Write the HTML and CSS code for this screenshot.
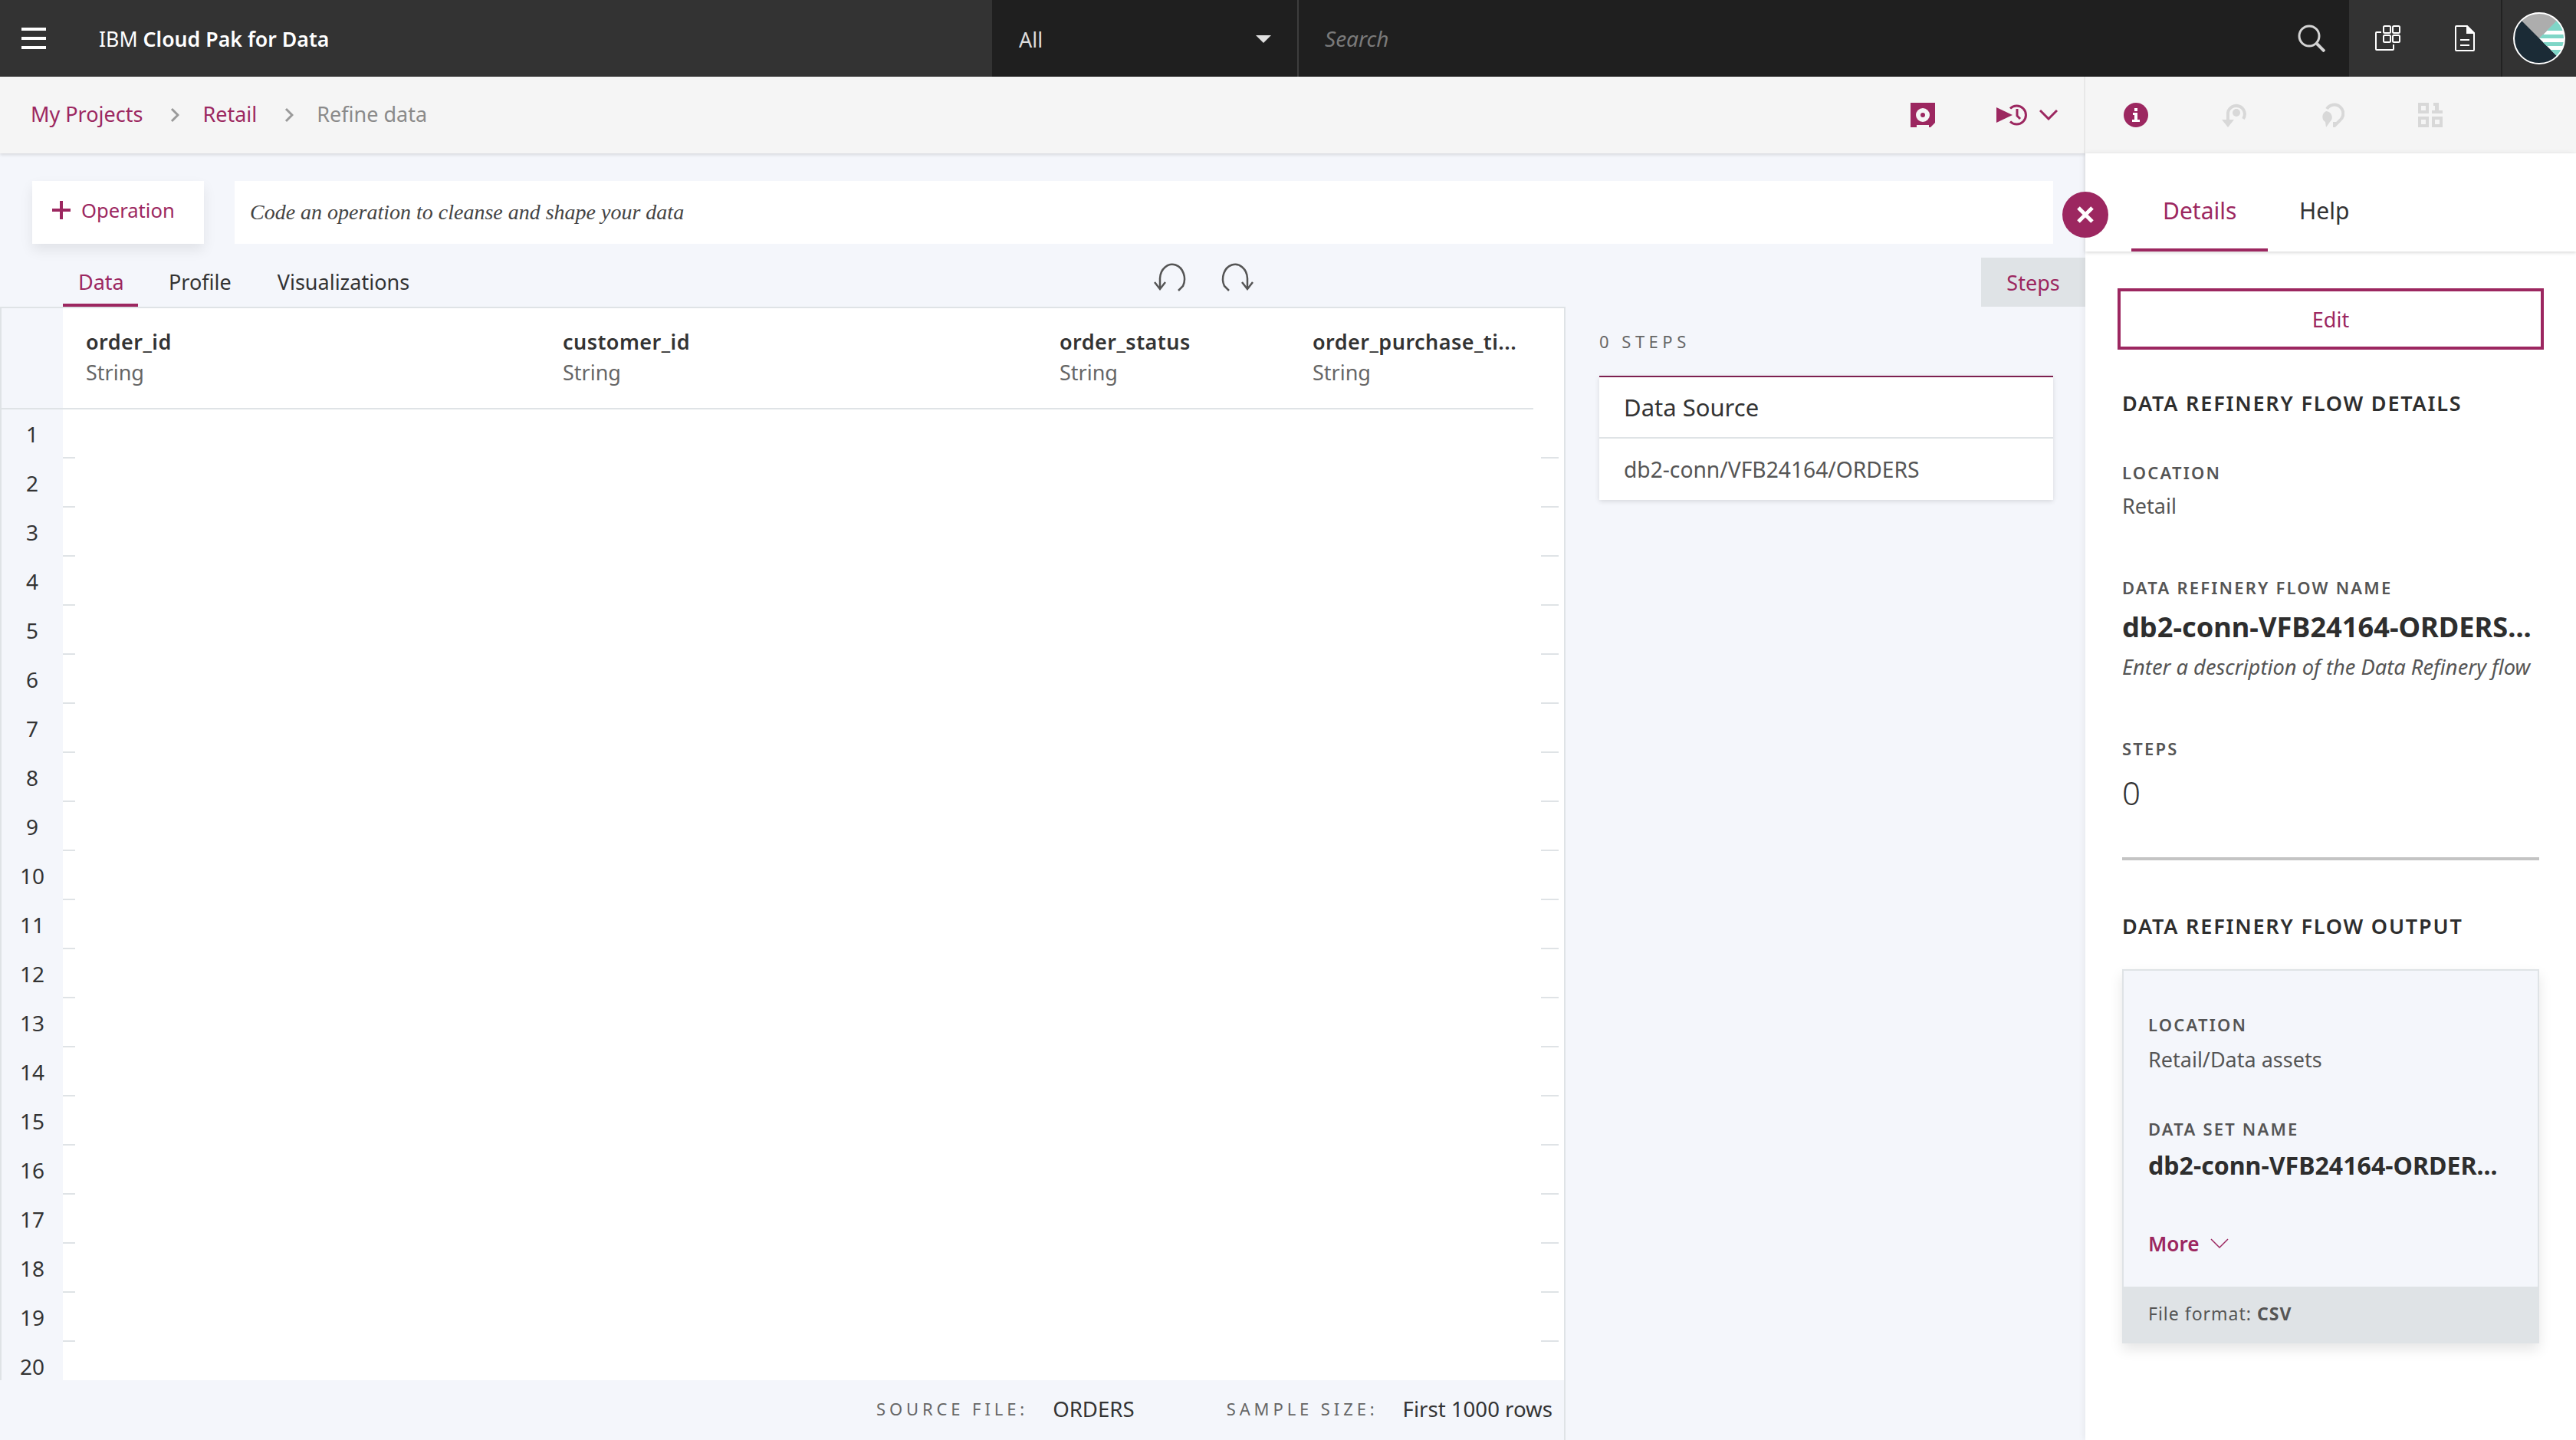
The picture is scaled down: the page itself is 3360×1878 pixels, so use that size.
FILE: index.html
```html
<!DOCTYPE html>
<html lang="en">
<head>
    <meta charset="UTF-8">
    <title>Refine data - IBM Cloud Pak for Data</title>
    <link rel="stylesheet" href="styles.css">
</head>
<body>
    <header class="top-bar">
        <div class="brand">
            <svg class="menu-icon" width="32" height="28" viewBox="0 0 32 28"><path d="M0 0h32v4H0zM0 12h32v4H0zM0 24h32v4H0z" fill="#fff"/></svg>
            <span class="brand-name">IBM <b>Cloud Pak for Data</b></span>
        </div>
        <div class="scope-select">
            <span>All</span>
            <svg width="20" height="10" viewBox="0 0 20 10"><path d="M0 0h20L10 10z" fill="#e0e0e0"/></svg>
        </div>
        <div class="search">
            <span class="search-text">Search</span>
            <svg width="36" height="36" viewBox="0 0 36 36" fill="none" stroke="#d4d4d4" stroke-width="3"><circle cx="15" cy="15" r="13"/><path d="M25 25l10 10" stroke-width="4"/></svg>
        </div>
        <div class="top-actions">
            <svg class="apps-icon" width="34" height="34" viewBox="0 0 34 34" fill="none" stroke="#fff" stroke-width="2"><rect x="11" y="1" width="9" height="9" rx="1.5"/><rect x="23" y="1" width="9" height="9" rx="1.5"/><rect x="11" y="13" width="9" height="9" rx="1.5"/><rect x="23" y="13" width="9" height="9" rx="1.5"/><path d="M8 9H2a1 1 0 0 0-1 1v21a1 1 0 0 0 1 1h21a1 1 0 0 0 1-1v-6"/></svg>
            <svg class="doc-icon" width="26" height="34" viewBox="0 0 26 34" fill="none" stroke="#fff" stroke-width="2"><path d="M16 1H2a1 1 0 0 0-1 1v30a1 1 0 0 0 1 1h22a1 1 0 0 0 1-1V10z"/><path d="M16 1v9h9" fill="#fff"/><path d="M7 19h12M7 26h12"/></svg>
        </div>
        <div class="avatar-box">
            <svg width="70" height="70" viewBox="0 0 70 70">
                <defs>
                    <clipPath id="avatarClip"><circle cx="35" cy="35" r="33"/></clipPath>
                    <clipPath id="wedgeClip"><path d="M35 35L70 0v70z"/></clipPath>
                </defs>
                <g clip-path="url(#avatarClip)">
                    <rect width="70" height="70" fill="#1b2b36"/>
                    <path d="M35 35L0 0h70z" fill="#adadad"/>
                    <path d="M35 35L70 0v70z" fill="#fff"/>
                    <g clip-path="url(#wedgeClip)" fill="#7fd6c7">
                        <rect x="30" y="8" width="40" height="17"/>
                        <rect x="30" y="30" width="40" height="5"/>
                        <rect x="30" y="40" width="40" height="5"/>
                        <rect x="30" y="50" width="40" height="10"/>
                    </g>
                </g>
                <circle cx="35" cy="35" r="33" fill="none" stroke="#fff" stroke-width="2"/>
            </svg>
        </div>
    </header>

    <div class="sub-bar">
        <div class="sub-left">
            <nav class="breadcrumb">
                <a href="#">My Projects</a>
                <svg class="crumb-sep" width="12" height="20" viewBox="0 0 12 20" fill="none" stroke="#9a9a9a" stroke-width="3"><path d="M2 2l8 8-8 8"/></svg>
                <a href="#">Retail</a>
                <svg class="crumb-sep" width="12" height="20" viewBox="0 0 12 20" fill="none" stroke="#9a9a9a" stroke-width="3"><path d="M2 2l8 8-8 8"/></svg>
                <span>Refine data</span>
            </nav>
            <div class="flow-actions">
                <svg width="32" height="32" viewBox="0 0 32 32"><path fill-rule="evenodd" d="M0 0h32v26l-6 6h-2v-3H8v3H0zM16 7a9 9 0 1 0 0 18 9 9 0 0 0 0-18zm0 6a3 3 0 1 1 0 6 3 3 0 0 1 0-6z" fill="#9c2760"/></svg>
                <svg width="42" height="28" viewBox="0 0 42 28" fill="none"><path d="M0 4l21 10L0 24z" fill="#9c2760"/><path d="M18 5.5A12 12 0 1 1 18 22.5" stroke="#9c2760" stroke-width="3"/><path d="M27 6v9l4 4" stroke="#9c2760" stroke-width="3"/></svg>
                <svg class="flow-chevron" width="24" height="14" viewBox="0 0 24 14" fill="none" stroke="#9c2760" stroke-width="3"><path d="M1 1l11 11L23 1"/></svg>
            </div>
        </div>
        <div class="sub-right">
            <svg width="32" height="32" viewBox="0 0 32 32"><circle cx="16" cy="16" r="16" fill="#9c2760"/><path d="M14 7h4v4h-4zM12 13h6v9h3v3H11v-3h3v-6h-2z" fill="#fff"/></svg>
            <svg width="32" height="32" viewBox="0 0 32 32" fill="none"><path d="M8 24V13a11 11 0 1 1 20 8" stroke="#d8d8d8" stroke-width="4"/><circle cx="19" cy="13" r="5" fill="#d8d8d8"/><path d="M0 22h16l-8 10z" fill="#d8d8d8"/></svg>
            <svg width="32" height="32" viewBox="0 0 32 32" fill="none"><path d="M9 8a11.500 11.500 0 1 1 17 15l-7 7v-5" stroke="#d8d8d8" stroke-width="4"/><path d="M8 11a8 8 0 0 1 5 14l-5 7-1-7a8 8 0 0 1 1-14z" fill="#d8d8d8"/></svg>
            <svg width="32" height="32" viewBox="0 0 32 32"><path fill-rule="evenodd" d="M0 0h14v14H0zM4 4v6h6V4zM0 18h14v14H0zM4 22v6h6v-6zM18 18h14v14H18zM22 22v6h6v-6zM20 0h7v10h5v4H18v-4h4V4h-2z" fill="#d8d8d8"/></svg>
        </div>
    </div>

    <main class="main">
        <section class="workspace">
            <div class="op-row">
                <button class="op-btn">
                    <svg width="24" height="24" viewBox="0 0 24 24"><path d="M10 0h4v10h10v4H14v10h-4V14H0v-4h10z" fill="#9c2760"/></svg>
                    Operation
                </button>
                <div class="op-input">Code an operation to cleanse and shape your data</div>
            </div>
            <div class="view-row">
                <div class="view-tabs">
                    <a class="view-tab active" href="#">Data</a>
                    <a class="view-tab" href="#">Profile</a>
                    <a class="view-tab" href="#">Visualizations</a>
                </div>
                <div class="undo-redo">
                    <svg width="48" height="40" viewBox="0 0 48 40" fill="none" stroke="#555" stroke-width="2.5"><path d="M9 34V22a16 19 0 1 1 30 10l-6 6"/><path d="M2 27l7 9 7-9"/></svg>
                    <svg width="48" height="40" viewBox="0 0 48 40" fill="none" stroke="#555" stroke-width="2.5"><path d="M39 34V22A16 19 0 1 0 9 32l6 6"/><path d="M46 27l-7 9-7-9"/></svg>
                </div>
                <button class="steps-btn">Steps</button>
            </div>
            <div class="content">
                <div class="data-area">
                    <div class="data-table">
                        <div class="head-row">
                            <div class="num-cell"></div>
                            <div class="col col-1"><b>order_id</b><span>String</span></div>
                            <div class="col col-2"><b>customer_id</b><span>String</span></div>
                            <div class="col col-3"><b>order_status</b><span>String</span></div>
                            <div class="col col-4"><b>order_purchase_ti...</b><span>String</span></div>
                        </div>
                        <div class="row"><div class="num-cell">1</div><div class="row-cells"></div></div>
                        <div class="row"><div class="num-cell">2</div><div class="row-cells"></div></div>
                        <div class="row"><div class="num-cell">3</div><div class="row-cells"></div></div>
                        <div class="row"><div class="num-cell">4</div><div class="row-cells"></div></div>
                        <div class="row"><div class="num-cell">5</div><div class="row-cells"></div></div>
                        <div class="row"><div class="num-cell">6</div><div class="row-cells"></div></div>
                        <div class="row"><div class="num-cell">7</div><div class="row-cells"></div></div>
                        <div class="row"><div class="num-cell">8</div><div class="row-cells"></div></div>
                        <div class="row"><div class="num-cell">9</div><div class="row-cells"></div></div>
                        <div class="row"><div class="num-cell">10</div><div class="row-cells"></div></div>
                        <div class="row"><div class="num-cell">11</div><div class="row-cells"></div></div>
                        <div class="row"><div class="num-cell">12</div><div class="row-cells"></div></div>
                        <div class="row"><div class="num-cell">13</div><div class="row-cells"></div></div>
                        <div class="row"><div class="num-cell">14</div><div class="row-cells"></div></div>
                        <div class="row"><div class="num-cell">15</div><div class="row-cells"></div></div>
                        <div class="row"><div class="num-cell">16</div><div class="row-cells"></div></div>
                        <div class="row"><div class="num-cell">17</div><div class="row-cells"></div></div>
                        <div class="row"><div class="num-cell">18</div><div class="row-cells"></div></div>
                        <div class="row"><div class="num-cell">19</div><div class="row-cells"></div></div>
                        <div class="row"><div class="num-cell">20</div><div class="row-cells"></div></div>
                    </div>
                    <div class="table-footer">
                        <span class="foot-label">SOURCE FILE:</span>
                        <span class="foot-value">ORDERS</span>
                        <span class="foot-label foot-second">SAMPLE SIZE:</span>
                        <span class="foot-value">First 1000 rows</span>
                    </div>
                </div>
                <aside class="steps-panel">
                    <div class="steps-count">0 STEPS</div>
                    <div class="steps-card">
                        <div class="steps-title">Data Source</div>
                        <div class="steps-source">db2-conn/VFB24164/ORDERS</div>
                    </div>
                </aside>
            </div>
        </section>

        <aside class="side-panel">
            <button class="close-btn" aria-label="Close">
                <svg width="22" height="22" viewBox="0 0 22 22"><path d="M2 2l18 18M20 2L2 20" stroke="#fff" stroke-width="5"/></svg>
            </button>
            <div class="side-tabs">
                <a class="side-tab active" href="#">Details</a>
                <a class="side-tab" href="#">Help</a>
            </div>
            <div class="side-body">
                <button class="edit-btn">Edit</button>
                <h2 class="side-heading heading-details">DATA REFINERY FLOW DETAILS</h2>
                <div class="label label-location">LOCATION</div>
                <div class="value">Retail</div>
                <div class="label label-name">DATA REFINERY FLOW NAME</div>
                <div class="flow-name">db2-conn-VFB24164-ORDERS...</div>
                <div class="flow-desc">Enter a description of the Data Refinery flow</div>
                <div class="label label-name">STEPS</div>
                <div class="step-num">0</div>
                <hr class="side-rule">
                <h2 class="side-heading heading-output">DATA REFINERY FLOW OUTPUT</h2>
                <div class="output-card">
                    <div class="output-body">
                        <div class="label">LOCATION</div>
                        <div class="value output-value">Retail/Data assets</div>
                        <div class="label output-label">DATA SET NAME</div>
                        <div class="output-name">db2-conn-VFB24164-ORDER...</div>
                        <a class="more-link" href="#">More
                            <svg width="24" height="14" viewBox="0 0 24 14" fill="none" stroke="#9c2760" stroke-width="1.5"><path d="M1 1l11 11L23 1"/></svg>
                        </a>
                    </div>
                    <div class="output-footer">File format: <b>CSV</b></div>
                </div>
            </div>
        </aside>
    </main>
</body>
</html>
```

FILE: styles.css
```css
* {
    margin: 0;
    padding: 0;
    box-sizing: border-box;
}

body {
    font-family: "Noto Sans", "Open Sans", Arial, sans-serif;
    width: 3360px;
    height: 1878px;
    overflow: hidden;
    background-color: #f4f6fb;
    color: #333;
    font-size: 27px;
}

a {
    text-decoration: none;
}

button {
    font-family: inherit;
    border: none;
    cursor: pointer;
}

svg {
    display: block;
    flex: none;
}

/* top bar */
.top-bar {
    display: flex;
    height: 100px;
    background-color: #1f1f1f;
}

.brand {
    display: flex;
    align-items: center;
    width: 1294px;
    padding-left: 28px;
    background-color: #333;
    color: #fff;
}

.brand-name {
    margin-left: 69px;
    font-size: 26.7px;
}

.brand-name b {
    font-weight: 600;
}

.scope-select {
    display: flex;
    align-items: center;
    justify-content: space-between;
    width: 400px;
    padding: 2px 34px 0 35px;
    border-right: 2px solid #3d3d3d;
    color: #ddd;
}

.search {
    display: flex;
    align-items: center;
    justify-content: space-between;
    width: 1370px;
    padding: 0 31px 0 34px;
    color: #7a7a7a;
    font-style: italic;
}

.search-text {
    font-size: 28px;
}

.top-actions {
    display: flex;
    align-items: center;
    width: 200px;
    padding-left: 34px;
    gap: 70px;
    background-color: #333;
    border-right: 2px solid #222;
}

.avatar-box {
    display: flex;
    align-items: center;
    padding-left: 13px;
    width: 96px;
    background-color: #333;
}

/* breadcrumb bar */
.sub-bar {
    position: relative;
    display: flex;
    height: 100px;
    background-color: #f5f5f5;
    box-shadow: 0 2px 4px rgba(0, 0, 0, 0.12);
}

.sub-left {
    display: flex;
    align-items: center;
    justify-content: space-between;
    width: 2720px;
    padding-left: 40px;
    border-right: 2px solid #e8e8e8;
}

.breadcrumb {
    display: flex;
    align-items: center;
    margin-top: -3px;
    color: #8a8a8a;
}

.breadcrumb a {
    color: #9c2760;
}

.crumb-sep {
    margin: 3px 30px 0 36px;
}

.flow-actions {
    display: flex;
    align-items: center;
    padding-right: 34px;
}

.flow-actions svg:nth-child(2) {
    margin-left: 80px;
}

.flow-chevron {
    margin-left: 14px;
}

.sub-right {
    display: flex;
    align-items: center;
    gap: 96px;
    padding: 0 0 0 50px;
    height: 100px;
}

/* main */
.main {
    display: flex;
    height: 1678px;
}

.workspace {
    width: 2720px;
}

.op-row {
    display: flex;
    gap: 40px;
    padding: 36px 42px 0;
}

.op-btn {
    display: flex;
    align-items: center;
    gap: 14px;
    width: 224px;
    height: 82px;
    padding: 0 0 6px 26px;
    background-color: #fff;
    box-shadow: 0 8px 16px rgba(0, 0, 0, 0.08);
    color: #9c2760;
    font-size: 25.6px;
}

.op-input {
    flex: 1;
    display: flex;
    align-items: center;
    height: 82px;
    padding-left: 20px;
    background-color: #fff;
    font-family: "Liberation Serif", serif;
    font-style: italic;
    font-size: 28px;
    color: #444;
}

.view-row {
    display: flex;
    align-items: flex-end;
    height: 82px;
    position: relative;
}

.view-tabs {
    display: flex;
    padding-left: 82px;
    width: 1504px;
}

.view-tab {
    height: 64px;
    padding: 0 20px;
    margin-right: 20px;
    line-height: 63px;
    color: #333;
}

.view-tab.active {
    width: 98px;
    color: #9c2760;
    border-bottom: 4px solid #9c2760;
}

.undo-redo {
    display: flex;
    gap: 36px;
    height: 59px;
}

.steps-btn {
    width: 136px;
    height: 64px;
    margin-left: auto;
    background-color: #dfe3e6;
    color: #9c2760;
    font-size: 27px;
}

.content {
    display: flex;
    height: 1478px;
}

/* data table */
.data-area {
    width: 2042px;
    border-right: 2px solid #dfe3e6;
}

.data-table {
    height: 1400px;
    overflow: hidden;
    background-color: #fff;
    border-top: 2px solid #dfe3e6;
    border-left: 2px solid #dfe3e6;
}

.head-row {
    display: flex;
    width: 1998px;
    height: 132px;
    border-bottom: 2px solid #dfe3e6;
}

.num-cell {
    flex: none;
    width: 80px;
    background-color: #f4f6fb;
    text-align: center;
    line-height: 64px;
    font-size: 28px;
}

.col {
    display: flex;
    flex-direction: column;
    padding-top: 24px;
}

.col b {
    font-weight: 600;
    line-height: 40px;
    letter-spacing: 0.45px;
}

.col span {
    line-height: 40px;
    color: #666;
}

.col-1 {
    width: 622px;
    padding-left: 30px;
}

.col-2 {
    width: 648px;
    padding-left: 30px;
}

.col-3 {
    width: 330px;
    padding-left: 30px;
}

.col-4 {
    padding-left: 30px;
}

.row {
    display: flex;
    height: 64px;
}

.row-cells {
    flex: 1;
    background:
        linear-gradient(#dfe3e6, #dfe3e6) left bottom / 16px 2px no-repeat,
        linear-gradient(#dfe3e6, #dfe3e6) right 7px bottom / 23px 2px no-repeat;
}

.table-footer {
    display: flex;
    align-items: center;
    justify-content: flex-end;
    height: 76px;
    padding: 0 15px 3px 0;
}

.foot-label {
    font-size: 22px;
    letter-spacing: 4.9px;
    color: #666;
}

.foot-value {
    margin-left: 32px;
    font-size: 27.6px;
}

.foot-second {
    margin-left: 120px;
}

/* steps panel */
.steps-panel {
    flex: 1;
    padding: 0 42px 0 44px;
}

.steps-count {
    margin-top: 30px;
    line-height: 30px;
    font-size: 22px;
    letter-spacing: 5.5px;
    color: #666;
}

.steps-card {
    margin-top: 30px;
    background-color: #fff;
    border-top: 2px solid #7d2050;
    box-shadow: 0 2px 6px rgba(0, 0, 0, 0.12);
}

.steps-title {
    height: 80px;
    padding-left: 32px;
    line-height: 79px;
    font-size: 31px;
    border-bottom: 2px solid #dfe3e6;
}

.steps-source {
    height: 80px;
    padding-left: 32px;
    line-height: 80px;
    font-size: 28.2px;
    color: #555;
}

/* right panel */
.side-panel {
    position: relative;
    width: 640px;
    background-color: #fff;
    box-shadow: -2px 0 8px rgba(0, 0, 0, 0.06);
}

.close-btn {
    position: absolute;
    left: -30px;
    top: 50px;
    display: flex;
    align-items: center;
    justify-content: center;
    width: 60px;
    height: 60px;
    border-radius: 50%;
    background-color: #9c2760;
}

.side-tabs {
    display: flex;
    height: 128px;
    padding-left: 60px;
    box-shadow: 0 2px 4px rgba(0, 0, 0, 0.14);
}

.side-tab {
    height: 128px;
    padding: 0 41px;
    line-height: 150px;
    font-size: 30px;
    color: #333;
}

.side-tab.active {
    width: 178px;
    color: #9c2760;
    border-bottom: 4px solid #9c2760;
}

.side-body {
    padding: 48px 48px 0;
}

.edit-btn {
    display: block;
    width: 556px;
    height: 80px;
    margin-left: -6px;
    background-color: #fff;
    border: 4px solid #9c2760;
    color: #9c2760;
    font-size: 27px;
}

.side-heading {
    line-height: 40px;
    font-size: 27px;
    font-weight: 600;
    letter-spacing: 1.8px;
    color: #2e2e2e;
}

.heading-details {
    margin-top: 50px;
}

.heading-output {
    margin-top: 66px;
}

.label {
    line-height: 30px;
    font-size: 22px;
    font-weight: 600;
    letter-spacing: 2.2px;
    color: #555;
}

.label-location {
    margin-top: 55px;
}

.value {
    margin-top: 9px;
    line-height: 40px;
    color: #555;
}

.label-name {
    margin-top: 71px;
}

.flow-name {
    margin-top: 11px;
    line-height: 50px;
    font-size: 36.2px;
    font-weight: 700;
    color: #2e2e2e;
    white-space: nowrap;
}

.flow-desc {
    margin-top: 8px;
    line-height: 40px;
    font-size: 27.3px;
    font-style: italic;
    color: #555;
    white-space: nowrap;
}

.step-num {
    margin-top: 18px;
    line-height: 50px;
    font-size: 42px;
    font-weight: 300;
}

.side-rule {
    margin-top: 59px;
    border: none;
    height: 4px;
    background-color: #c4c4c4;
}

.output-card {
    margin-top: 36px;
    background-color: #f4f6fb;
    box-shadow: 0 8px 16px rgba(0, 0, 0, 0.1);
}

.output-body {
    height: 414px;
    padding: 55px 32px 0;
    border: 2px solid #dfe3e6;
    border-bottom: none;
}

.output-value {
    margin-top: 11px;
}

.output-label {
    margin-top: 55px;
}

.output-name {
    margin-top: 13px;
    line-height: 40px;
    font-size: 32.1px;
    font-weight: 700;
    color: #2e2e2e;
    white-space: nowrap;
}

.more-link {
    display: flex;
    align-items: center;
    gap: 14px;
    margin-top: 62px;
    line-height: 40px;
    font-size: 26.2px;
    font-weight: 600;
    color: #9c2760;
}

.output-footer {
    height: 74px;
    padding-left: 34px;
    line-height: 70px;
    background-color: #dfe3e6;
    font-size: 23px;
    letter-spacing: 1px;
    color: #555;
}
```
